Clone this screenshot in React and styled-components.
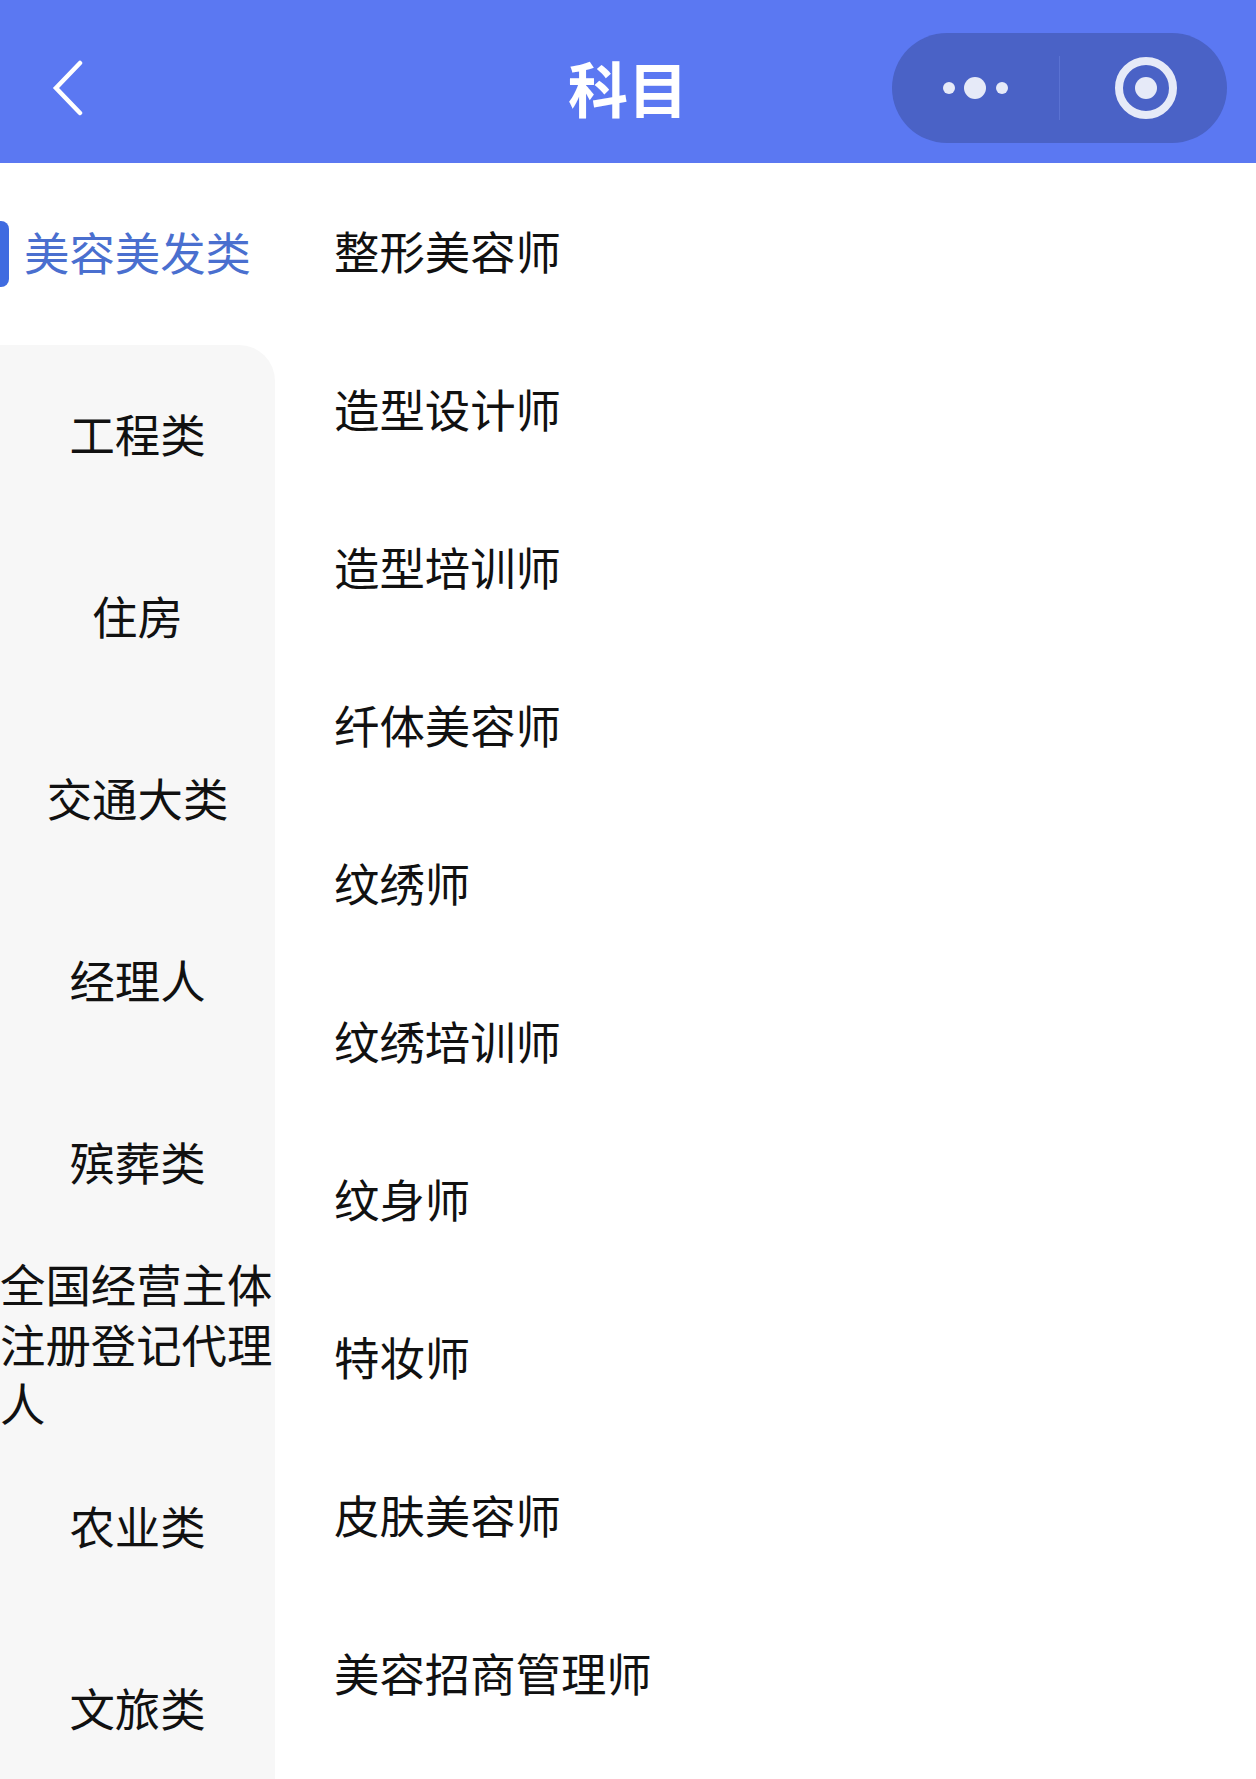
import styled, { createGlobalStyle } from "styled-components"

const categories = ["美容美发类", "工程类", "住房", "交通大类", "经理人", "殡葬类", "全国经营主体注册登记代理人", "农业类", "文旅类"]
const subjects = ["整形美容师", "造型设计师", "造型培训师", "纤体美容师", "纹绣师", "纹绣培训师", "纹身师", "特妆师", "皮肤美容师", "美容招商管理师"]

export default function App() {
  return <Page>
    <GlobalStyle />
    <Header>
      <BackCell>
        <svg width="34" height="56" viewBox="0 0 34 56" fill="none">
          <polyline points="29,3 5,28 29,53" stroke="#fff" strokeWidth="4.5" strokeLinecap="round" strokeLinejoin="miter" />
        </svg>
      </BackCell>
      <Title>科目</Title>
      <CapsuleCell>
        <Capsule>
          <CapsuleHalf>
            <svg width="70" height="24" viewBox="0 0 70 24" fill="#e6eaf8">
              <circle cx="8" cy="12" r="6" />
              <circle cx="34" cy="12" r="11" />
              <circle cx="61" cy="12" r="6" />
            </svg>
          </CapsuleHalf>
          <CapsuleDivider />
          <CapsuleHalf $nudge={4}>
            <svg width="64" height="64" viewBox="0 0 64 64" fill="none">
              <circle cx="32" cy="32" r="27" stroke="#e6eaf8" strokeWidth="8" />
              <circle cx="32" cy="32" r="11" fill="#e6eaf8" />
            </svg>
          </CapsuleHalf>
        </Capsule>
      </CapsuleCell>
    </Header>
    <Body>
      <Sidebar>
        {categories.map((name, i) => (
          <Category key={name} $active={i === 0} $afterActive={i === 1}>
            {i === 0 && <ActiveBar />}
            <span>{name}</span>
          </Category>
        ))}
      </Sidebar>
      <SubjectList>
        {subjects.map(name => <Subject key={name}>{name}</Subject>)}
      </SubjectList>
    </Body>
  </Page>
}

const GlobalStyle = createGlobalStyle`
  html, body {
    margin: 0;
    background: #fff;
  }
`

const Page = styled.div`
  height: 1779px;
  overflow: hidden;
  display: flex;
  flex-direction: column;
  background: #fff;
  font-family: "Noto Sans CJK SC", "Liberation Sans", sans-serif;
  color: #111;
`

const Header = styled.header`
  flex: none;
  height: 163px;
  box-sizing: border-box;
  padding-top: 13px;
  display: grid;
  grid-template-columns: 1fr auto 1fr;
  align-items: center;
  background: #5b78f2;
`

const BackCell = styled.div`
  display: flex;
  padding-left: 51px;
`

const Title = styled.h1`
  margin: 0 0 3px;
  font-size: 60px;
  line-height: 1;
  font-weight: 700;
  color: #fff;
`

const CapsuleCell = styled.div`
  display: flex;
  justify-content: flex-end;
  padding-right: 29px;
`

const Capsule = styled.div`
  width: 335px;
  height: 110px;
  border-radius: 55px;
  display: flex;
  align-items: center;
  background: #4a62c6;
`

const CapsuleHalf = styled.div`
  flex: none;
  width: 167px;
  box-sizing: border-box;
  display: flex;
  justify-content: center;
  padding-left: ${p => p.$nudge ?? 0}px;
`

const CapsuleDivider = styled.div`
  flex: none;
  width: 1px;
  height: 64px;
  background: #5a72d2;
`

const Body = styled.div`
  flex: 1;
  display: flex;
  min-height: 0;
`

const Sidebar = styled.nav`
  flex: none;
  width: 275px;
  display: flex;
  flex-direction: column;
`

const Category = styled.div`
  position: relative;
  flex: none;
  height: 182px;
  box-sizing: border-box;
  padding-bottom: 5px;
  display: flex;
  align-items: center;
  justify-content: center;
  font-size: 45.4px;
  line-height: 59.5px;
  color: ${p => (p.$active ? "#4a6fcf" : "#111")};
  background: ${p => (p.$active ? "#fff" : "#f7f7f7")};
  border-top-right-radius: ${p => (p.$afterActive ? "36px" : "0")};
`

const ActiveBar = styled.div`
  position: absolute;
  left: 0;
  top: 58px;
  width: 9px;
  height: 66px;
  border-radius: 0 8px 8px 0;
  background: #3f6be0;
`

const SubjectList = styled.ul`
  flex: 1;
  margin: 0;
  padding: 8px 0 0 59px;
  list-style: none;
`

const Subject = styled.li`
  height: 158px;
  display: flex;
  align-items: center;
  font-size: 45.4px;
  color: #111;
`
